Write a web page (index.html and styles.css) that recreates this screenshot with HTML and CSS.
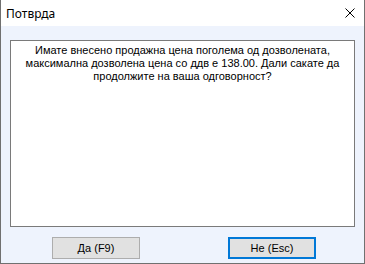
FILE: index.html
```html
<!DOCTYPE html>
<html>
<head>
<meta charset="utf-8">
<link rel="stylesheet" href="styles.css">
</head>
<body>
<div class="window">
  <div class="titlebar">
    <span class="title">Потврда</span>
    <svg class="close" width="10" height="10" viewBox="0 0 10 10"><path d="M0.5 0.5 L9.5 9.5 M9.5 0.5 L0.5 9.5" stroke="#000" stroke-width="1" fill="none"/></svg>
  </div>
  <div class="content">
    <div class="message">Имате внесено продажна цена поголема од дозволената, максимална дозволена цена со ддв е 138.00. Дали сакате да продолжите на ваша одговорност?</div>
    <div class="buttons">
      <div class="btn">Да (F9)</div>
      <div class="btn btn-default">Не (Esc)</div>
    </div>
  </div>
</div>
</body>
</html>
```
FILE: styles.css
```css
html, body {
  margin: 0;
  padding: 0;
  background: #ffffff;
}
.window {
  width: 365px;
  height: 264px;
  box-sizing: border-box;
  border-left: 1px solid #707070;
  border-right: 1px solid #707070;
  border-bottom: 1px solid #707070;
  display: flex;
  flex-direction: column;
}
.titlebar {
  height: 26px;
  flex: none;
  background: #ffffff;
  display: flex;
  align-items: center;
  justify-content: space-between;
  padding: 0 9px 0 5px;
}
.title {
  font-family: "Noto Sans", "Open Sans", sans-serif;
  font-size: 12px;
  color: #000;
  position: relative;
  top: 0px;
}
.close {
  display: block;
  margin-top: -1px;
}
.content {
  flex: 1;
  background: #eef3fd;
  padding: 14px 9px 4px 9px;
  display: flex;
  flex-direction: column;
}
.message {
  height: 187px;
  box-sizing: border-box;
  border: 1px solid #7a7a7a;
  background: #ffffff;
  padding: 3px 6px 0 6px;
  font-family: "Liberation Sans", Arial, sans-serif;
  font-size: 11px;
  line-height: 13px;
  text-align: center;
  color: #000;
}
.buttons {
  margin-top: 10px;
  display: flex;
  padding-left: 42px;
  gap: 88px;
}
.btn {
  width: 88px;
  height: 22px;
  box-sizing: border-box;
  border: 1px solid #adadad;
  background: #e1e1e1;
  font-family: "Liberation Sans", Arial, sans-serif;
  font-size: 11px;
  color: #000;
  display: flex;
  align-items: center;
  justify-content: center;
}
.btn-default {
  border: 2px solid #0078d7;
}
```
